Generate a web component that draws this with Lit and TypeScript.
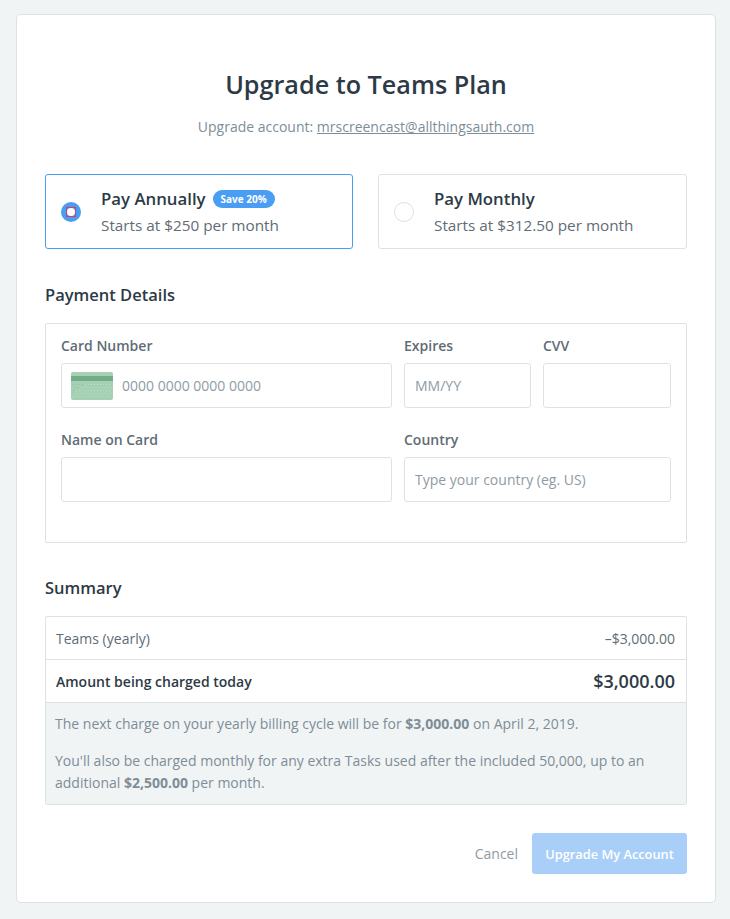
import { LitElement, html, css, svg } from "lit";
import { customElement } from "lit/decorators.js";

const dots = () => {
  const out = [];
  for (let y = 12; y < 27; y += 3) {
    for (let x = 2 + (y % 2) * 1.5; x < 41; x += 3) {
      const dark = x + y * 1.2 < 26;
      out.push(svg`<rect x="${x}" y="${y}" width="1" height="1" fill="${dark ? "#8fc2a2" : "#bbdcc7"}"/>`);
    }
  }
  return out;
};

@customElement("app-root")
export class AppRoot extends LitElement {
  static styles = css`
    :host { display: block; min-height: 919px; background: #f1f4f5; font-family: "Open Sans", sans-serif; color: #2d3a45; box-sizing: border-box; padding: 14px 14px 16px 16px; }
    * { box-sizing: border-box; }
    .card { height: 889px; background: #fff; border: 1px solid #dde2e5; border-radius: 5px; padding: 0 28px; display: flex; flex-direction: column; }
    h1 { margin: 50px 0 0; font-size: 25.2px; line-height: 38px; font-weight: 600; text-align: center; color: #2d3a45; }
    .sub { margin-top: 14px; font-size: 14px; line-height: 20px; text-align: center; color: #7e8d97; }
    .sub a { color: #7e8d97; text-decoration: underline; }
    .plans { display: grid; grid-template-columns: 308px 309px; gap: 25px; margin-top: 37px; }
    .plan { height: 75px; border: 1px solid #dde2e5; border-radius: 3px; display: flex; align-items: center; padding-left: 15px; gap: 20px; }
    .plan.on { border-color: #499df3; }
    .radio { width: 20px; height: 20px; border-radius: 50%; border: 1px solid #dde2e5; background: #fff; flex: none; display: flex; align-items: center; justify-content: center; }
    .on .radio { border: none; background: #499df3; }
    .dot { width: 10px; height: 10px; border: 1px solid #d1425f; }
    .dot::after { content: ""; display: block; width: 8px; height: 8px; border-radius: 50%; background: #fff; }
    .pt { font-size: 16.8px; line-height: 24px; font-weight: 600; color: #2d3a45; display: flex; align-items: center; gap: 7px; }
    .pd { font-size: 15.3px; line-height: 22px; margin-top: 3px; color: #5f6c76; }
    .badge { background: #499df3; color: #fff; font-size: 10px; line-height: 18px; height: 18px; font-weight: 700; border-radius: 9px; padding: 0 8px; }
    h2 { margin: 0; font-size: 16.5px; line-height: 24px; font-weight: 600; color: #2d3a45; }
    .pay-h { margin-top: 34px; }
    .box { margin-top: 16px; height: 220px; border: 1px solid #dde2e5; border-radius: 2px; padding: 12px 15px 0; display: grid; grid-template-columns: 331px 127px 128px; column-gap: 12px; grid-template-rows: 72px 72px; row-gap: 22px; align-content: start; }
    .field { display: flex; flex-direction: column; }
    label { font-size: 14px; line-height: 20px; font-weight: 600; color: #5f6c76; }
    .input { margin-top: 7px; height: 45px; border: 1px solid #dde2e5; border-radius: 3px; display: flex; align-items: center; padding-left: 10px; gap: 9px; font-size: 14px; color: #8e9ba5; }
    .input.has-cc { padding-left: 9px; }
    .c2 { grid-column: span 2; }
    .cc { flex: none; }
    .sum-h { margin-top: 33px; }
    .sum { margin-top: 16px; border: 1px solid #dde2e5; border-radius: 2px; }
    .row { display: flex; justify-content: space-between; align-items: center; padding: 0 11px 0 10px; font-size: 14px; }
    .r1 { height: 43px; color: #5f6c76; border-bottom: 1px solid #dde2e5; }
    .r2 { height: 42px; font-weight: 600; color: #2d3a45; }
    .big { font-size: 18px; }
    .note { background: #f1f4f5; border-top: 1px solid #dde2e5; height: 102px; padding: 10px 10px 0 9px; font-size: 14px; line-height: 22px; color: #7e8d97; }
    .note p { margin: 0 0 15px; }
    .note b { font-weight: 700; }
    .foot { margin-top: 28px; display: flex; justify-content: flex-end; align-items: center; gap: 14px; }
    .cancel { font-size: 14px; color: #8e9ba5; }
    .btn { width: 155px; height: 41px; border-radius: 3px; background: #a9cff8; color: #fff; font-size: 12.8px; font-weight: 600; display: flex; align-items: center; justify-content: center; }
  `;

  render() {
    return html`<div class="card">
      <h1>Upgrade to Teams Plan</h1>
      <div class="sub">Upgrade account: <a>mrscreencast@allthingsauth.com</a></div>
      <div class="plans">
        <div class="plan on"><span class="radio"><span class="dot"></span></span><div>
          <div class="pt">Pay Annually <span class="badge">Save 20%</span></div>
          <div class="pd">Starts at $250 per month</div></div></div>
        <div class="plan"><span class="radio"></span><div>
          <div class="pt">Pay Monthly</div>
          <div class="pd">Starts at $312.50 per month</div></div></div>
      </div>
      <h2 class="pay-h">Payment Details</h2>
      <div class="box">
        <div class="field"><label>Card Number</label><div class="input has-cc">
          <svg class="cc" width="42" height="28" viewBox="0 0 42 28"><rect width="42" height="28" rx="2" fill="#a5d0b4"/><rect y="4" width="42" height="5" fill="#74ab88"/>${dots()}</svg>
          0000 0000 0000 0000</div></div>
        <div class="field"><label>Expires</label><div class="input">MM/YY</div></div>
        <div class="field"><label>CVV</label><div class="input"></div></div>
        <div class="field"><label>Name on Card</label><div class="input"></div></div>
        <div class="field c2"><label>Country</label><div class="input">Type your country (eg. US)</div></div>
      </div>
      <h2 class="sum-h">Summary</h2>
      <div class="sum">
        <div class="row r1"><span>Teams (yearly)</span><span>–$3,000.00</span></div>
        <div class="row r2"><span>Amount being charged today</span><span class="big">$3,000.00</span></div>
        <div class="note"><p>The next charge on your yearly billing cycle will be for <b>$3,000.00</b> on April 2, 2019.</p>
        <p>You'll also be charged monthly for any extra Tasks used after the included 50,000, up to an additional <b>$2,500.00</b> per month.</p></div>
      </div>
      <div class="foot"><span class="cancel">Cancel</span><span class="btn">Upgrade My Account</span></div>
    </div>`;
  }
}
